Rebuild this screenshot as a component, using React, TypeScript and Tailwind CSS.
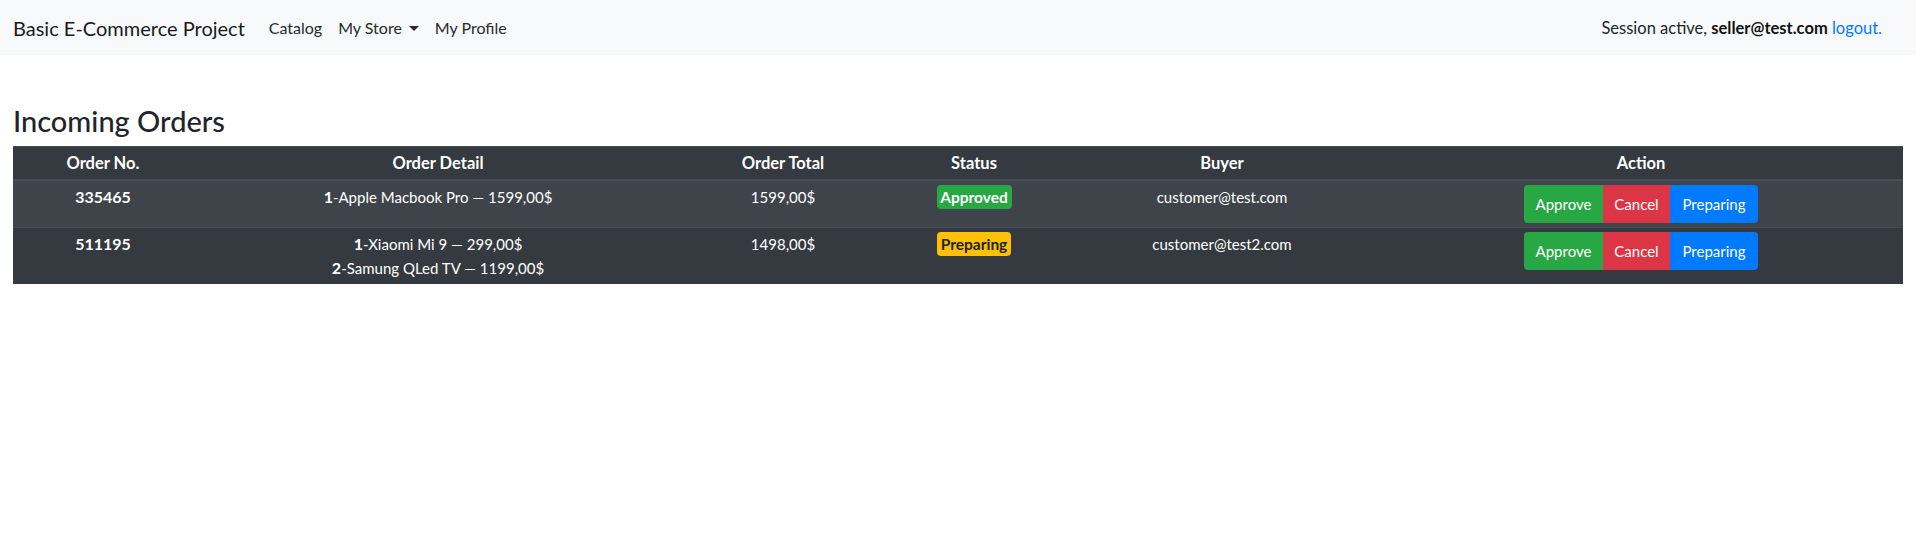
import React from "react";

type Order = {
  no: string;
  items: { qty: number; name: string; price: string }[];
  total: string;
  status: "Approved" | "Preparing";
  buyer: string;
};

const orders: Order[] = [
  {
    no: "335465",
    items: [{ qty: 1, name: "Apple Macbook Pro", price: "1599,00$" }],
    total: "1599,00$",
    status: "Approved",
    buyer: "customer@test.com",
  },
  {
    no: "511195",
    items: [
      { qty: 1, name: "Xiaomi Mi 9", price: "299,00$" },
      { qty: 2, name: "Samung QLed TV", price: "1199,00$" },
    ],
    total: "1498,00$",
    status: "Preparing",
    buyer: "customer@test2.com",
  },
];

function StatusBadge({ status }: { status: Order["status"] }) {
  if (status === "Approved") {
    return (
      <span className="inline-block h-[24px] w-[75px] rounded-[4px] bg-[#28a745] text-center text-[15.5px] font-bold leading-[24px] text-white">
        Approved
      </span>
    );
  }
  return (
    <span className="inline-block h-[24px] w-[74px] rounded-[4px] bg-[#ffc107] text-center text-[15.5px] font-bold leading-[24px] text-[#212529]">
      Preparing
    </span>
  );
}

function ActionButtons() {
  return (
    <div className="inline-flex align-top">
      <button className="h-[38px] w-[79px] rounded-l-[4px] bg-[#28a745] text-[15px] leading-[24px] text-white">
        Approve
      </button>
      <button className="h-[38px] w-[67px] bg-[#dc3545] text-[15px] leading-[24px] text-white">
        Cancel
      </button>
      <button className="h-[38px] w-[88px] rounded-r-[4px] bg-[#007bff] text-[15px] leading-[24px] text-white">
        Preparing
      </button>
    </div>
  );
}

export default function App() {
  return (
    <div className="min-h-[541px] bg-white font-['Lato','Liberation_Sans',sans-serif] text-[#212529]">
      <nav className="flex h-[55px] items-center bg-[#f8f9fa] px-[13px]">
        <a className="mr-[16px] text-[20px] leading-[30px] text-[#1a1a1a]">Basic E-Commerce Project</a>
        <ul className="flex items-center">
          <li>
            <a className="block px-[8px] text-[16px] leading-[24px] text-[#2a2a2a]">Catalog</a>
          </li>
          <li>
            <a className="flex items-center px-[8px] text-[16px] leading-[24px] text-[#2a2a2a]">
              My Store
              <span className="ml-[7px] mt-[1px] inline-block h-0 w-0 border-x-[5px] border-t-[5px] border-b-0 border-x-transparent border-t-[#2a2a2a]" />
            </a>
          </li>
          <li>
            <a className="block px-[8px] text-[16px] leading-[24px] text-[#2a2a2a]">My Profile</a>
          </li>
        </ul>
        <div className="ml-auto mr-[21px] text-[16.5px] leading-[24px] text-[#212529]">
          Session active, <b className="font-bold text-[#111]">seller@test.com</b>{" "}
          <a className="text-[#007bff]">logout.</a>
        </div>
      </nav>

      <main className="px-[13px]">
        <h3 className="mb-[8px] mt-[48px] text-[29px] font-medium leading-[35px] text-[#212529]">
          Incoming Orders
        </h3>
        <table className="w-full table-fixed border-collapse bg-[#343a40] text-white">
          <colgroup>
            <col className="w-[180px]" />
            <col className="w-[490px]" />
            <col className="w-[200px]" />
            <col className="w-[182px]" />
            <col className="w-[314px]" />
            <col />
          </colgroup>
          <thead>
            <tr>
              {["Order No.", "Order Detail", "Order Total", "Status", "Buyer", "Action"].map((h) => (
                <th
                  key={h}
                  className="border-t border-b-2 border-t-[#454d55] border-b-[#454d55] py-[4px] text-center align-bottom text-[16.5px] font-bold leading-[24px]"
                >
                  {h}
                </th>
              ))}
            </tr>
          </thead>
          <tbody>
            {orders.map((o, i) => (
              <tr key={o.no} className={i % 2 === 0 ? "bg-[#3e444a]" : "bg-[#343a40]"}>
                <td className="border-t border-[#454d55] py-[4px] text-center align-top text-[16px] font-bold leading-[24px]">
                  {o.no}
                </td>
                <td className="border-t border-[#454d55] py-[4px] text-center align-top text-[15px] leading-[24px]">
                  {o.items.map((it) => (
                    <div key={it.name}>
                      <b className="text-[16px] font-bold">{it.qty}</b>-{it.name} — {it.price}
                    </div>
                  ))}
                </td>
                <td className="border-t border-[#454d55] py-[4px] text-center align-top text-[15px] leading-[24px]">
                  {o.total}
                </td>
                <td className="border-t border-[#454d55] py-[4px] text-center align-top leading-[24px]">
                  <StatusBadge status={o.status} />
                </td>
                <td className="border-t border-[#454d55] py-[4px] text-center align-top text-[15px] leading-[24px]">
                  {o.buyer}
                </td>
                <td className="border-t border-[#454d55] py-[4px] text-center align-top leading-[24px]">
                  <ActionButtons />
                </td>
              </tr>
            ))}
          </tbody>
        </table>
      </main>
    </div>
  );
}
